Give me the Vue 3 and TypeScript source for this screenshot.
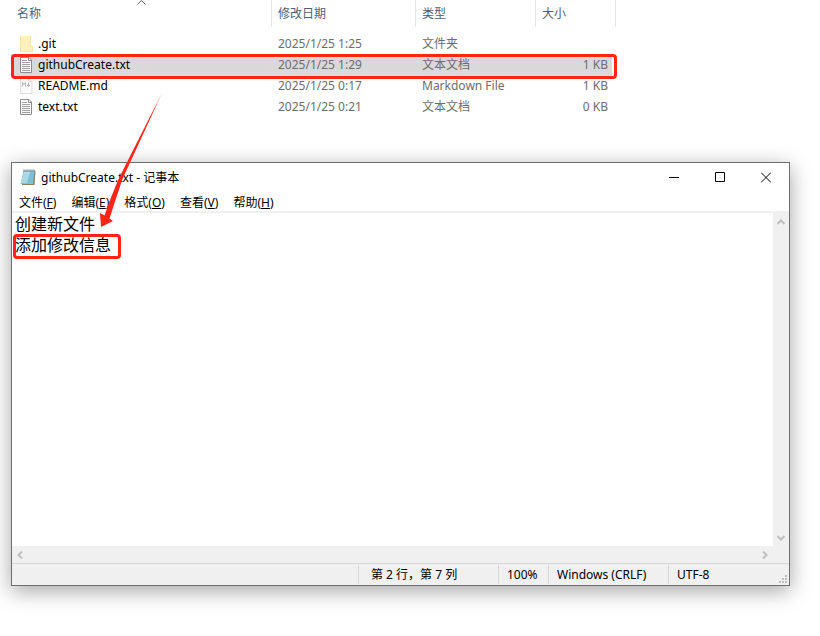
<script setup lang="ts">
import { ref } from 'vue'

interface FileRow {
  name: string
  date: string
  type: string
  size: string
  icon: 'folder' | 'text' | 'markdown'
}

const files: FileRow[] = [
  { name: '.git', date: '2025/1/25 1:25', type: '文件夹', size: '', icon: 'folder' },
  { name: 'githubCreate.txt', date: '2025/1/25 1:29', type: '文本文档', size: '1 KB', icon: 'text' },
  { name: 'README.md', date: '2025/1/25 0:17', type: 'Markdown File', size: '1 KB', icon: 'markdown' },
  { name: 'text.txt', date: '2025/1/25 0:21', type: '文本文档', size: '0 KB', icon: 'text' },
]
const selected = ref('githubCreate.txt')

const menus = [
  { label: '文件', key: 'F' },
  { label: '编辑', key: 'E' },
  { label: '格式', key: 'O' },
  { label: '查看', key: 'V' },
  { label: '帮助', key: 'H' },
]
const content = ref('创建新文件\n添加修改信息')
</script>

<template>
  <main class="desktop">
    <section class="explorer">
      <table class="files">
        <colgroup>
          <col class="c-name" /><col class="c-date" /><col class="c-type" /><col class="c-size" />
        </colgroup>
        <thead>
          <tr>
            <th scope="col" aria-sort="ascending">
              名称
              <svg class="sort" width="9" height="5" viewBox="0 0 9 5"><path d="M.5 4.500 4.500.5l4 4" fill="none" stroke="#666" /></svg>
            </th>
            <th scope="col">修改日期</th>
            <th scope="col">类型</th>
            <th scope="col">大小</th>
          </tr>
        </thead>
        <tbody>
          <tr v-for="f in files" :key="f.name" :class="{ selected: f.name === selected }" @click="selected = f.name">
            <td class="name">
              <span class="cell">
                <svg v-if="f.icon === 'folder'" width="16" height="16" viewBox="0 0 16 16">
                  <path d="M2 0h11v9l1.500 1v6H2z" fill="#fff0bd" />
                  <path d="M2.500 0v15.500h12v-5h-2V0" fill="none" stroke="#f8e5a6" />
                </svg>
                <svg v-else-if="f.icon === 'text'" width="16" height="16" viewBox="0 0 16 16">
                  <path d="M2.500.5h8.500l2.500 2.500v12.500h-11z" fill="#fafafa" stroke="#8c8c8c" />
                  <path d="M10.500.5v3h3" fill="none" stroke="#8c8c8c" />
                  <path d="M4 3.500h5M4 5.500h8M4 7.500h8M4 9.500h8M4 11.500h8M4 13.500h8" stroke="#a0a0a0" />
                </svg>
                <svg v-else width="16" height="16" viewBox="0 0 16 16">
                  <path d="M2.500.5h8.500l3 3v12H2.500z" fill="#fafafa" stroke="#dedede" />
                  <path d="M10.500.5v3h3.500" fill="none" stroke="#dedede" />
                  <path d="M4.500 8.500V4.500l1.500 2 1.500-2v4M10.500 4.500v4M9 7l1.500 1.500L12 7" fill="none" stroke="#b4b4b4" />
                </svg>
                {{ f.name }}
              </span>
            </td>
            <td>{{ f.date }}</td>
            <td>{{ f.type }}</td>
            <td class="size">{{ f.size }}</td>
          </tr>
        </tbody>
      </table>
      <div class="mark mark-row"></div>
    </section>

    <section class="notepad">
      <header class="titlebar">
        <svg width="16" height="17" viewBox="0 0 16 17">
          <path d="M4 2h11.500L14.500 16H2z" fill="#8b7c5c" />
          <path d="M3.500 2H14.500l-1.500 13H.5z" fill="#7fc1d6" />
          <path d="M4 3h6L7 14H1z" fill="#b9e3ee" />
          <path d="M3.500 5h10M3 7h10M3 9h10M2 11h11M2 13h10" stroke="#74b4c8" stroke-width=".5" />
          <path d="M3.500 1.500h11" stroke="#4f6068" stroke-width="2" stroke-dasharray="1 1" />
        </svg>
        <h1>githubCreate.txt - 记事本</h1>
        <div class="controls">
          <button type="button" aria-label="最小化"><svg width="10" height="11"><path d="M0 5.500h10" stroke="#000" /></svg></button>
          <button type="button" aria-label="最大化"><svg width="10" height="11"><path d="M.5.5h9v9h-9z" fill="none" stroke="#000" /></svg></button>
          <button type="button" aria-label="关闭"><svg width="10" height="11"><path d="m0 .5 10 10m0-10-10 10" stroke="#000" /></svg></button>
        </div>
      </header>
      <nav class="menu">
        <button v-for="m in menus" :key="m.key" type="button">{{ m.label }}(<u>{{ m.key }}</u>)</button>
      </nav>
      <div class="editor">
        <textarea v-model="content" aria-label="文本编辑器" spellcheck="false"></textarea>
        <div class="vbar">
          <button type="button" aria-label="向上滚动"><svg width="8" height="6"><path d="m.5 5 3.500-3.500L7.500 5" /></svg></button>
          <button type="button" aria-label="向下滚动"><svg width="8" height="6"><path d="m.5 1 3.500 3.500L7.500 1" /></svg></button>
        </div>
        <div class="hbar">
          <button type="button" aria-label="向左滚动"><svg width="6" height="8"><path d="M5 .5 1.500 4 5 7.500" /></svg></button>
          <button type="button" aria-label="向右滚动"><svg width="6" height="8"><path d="M1 .5 4.500 4 1 7.500" /></svg></button>
        </div>
        <div class="mark mark-text"></div>
      </div>
      <footer class="status">
        <span></span>
        <span class="position">第 2 行，第 7 列</span>
        <span>100%</span>
        <span>Windows (CRLF)</span>
        <span>UTF-8</span>
        <svg class="grip" width="8" height="8"><path d="M6 1h2M3 4h2M6 4h2M0 7h2M3 7h2M6 7h2" stroke="#bfbfbf" stroke-width="2" /></svg>
      </footer>
    </section>

    <svg class="arrow" width="66" height="140" viewBox="0 0 66 140">
      <defs>
        <linearGradient id="tail" x1="0" y1="0" x2="0" y2="1">
          <stop offset="0" stop-color="#ff2418" stop-opacity=".4" />
          <stop offset=".15" stop-color="#ff2418" />
        </linearGradient>
      </defs>
      <path d="M64.500 1 24.500 88 17.500 109 11.500 127.500 15 130 3 136 2 122 6.500 124.500 12 109 20.500 88z" fill="url(#tail)" />
    </svg>
  </main>
</template>

<style>
body {
  margin: 0;
  background: #fff;
}
</style>

<style scoped>
.desktop {
  position: relative;
  display: flex;
  flex-direction: column;
  box-sizing: border-box;
  min-height: 100vh;
  padding: 0 30px 50px 11px;
  overflow: hidden;
  font: 12px/16px "Noto Sans", "Noto Sans CJK SC", sans-serif;
  color: #000;
}
.explorer {
  position: relative;
  height: 162px;
}
.files {
  width: 605px;
  border-collapse: separate;
  border-spacing: 0;
  table-layout: fixed;
}
.c-name { width: 261px; }
.c-date { width: 144px; }
.c-type { width: 120px; }
.c-size { width: 80px; }
th {
  position: relative;
  height: 27px;
  padding: 0 6px;
  box-sizing: border-box;
  text-align: left;
  font-weight: 400;
  color: #4c607a;
  border-right: 1px solid #e5e5e5;
}
.sort {
  position: absolute;
  top: 0;
  left: calc(50% - 4px);
}
thead::after {
  content: "";
  display: block;
  height: 6px;
}
td {
  height: 21px;
  padding: 0 4px 0 6px;
  color: #6d6d6d;
  white-space: nowrap;
}
.name { color: #000; padding-left: 7px; }
.cell {
  display: flex;
  align-items: center;
  gap: 4px;
}
.size {
  text-align: right;
  border-right: 4px solid #fff;
}
.selected { background: #d9d9d9; }
.selected td { box-shadow: 0 1px #d9d9d9; }
.mark {
  position: absolute;
  box-sizing: border-box;
  border: 3px solid #ff2418;
  border-radius: 4px;
  pointer-events: none;
}
.mark-row {
  left: 0;
  top: 54px;
  width: 606px;
  height: 25px;
}
.mark-text {
  left: 1px;
  top: 21px;
  width: 108px;
  height: 25px;
}
.notepad {
  flex: 1;
  display: flex;
  flex-direction: column;
  border: 1px solid #6e6e6e;
  background: #fff;
  box-shadow: 0 5px 20px rgba(0, 0, 0, 0.36);
}
.titlebar {
  display: flex;
  align-items: center;
  gap: 5px;
  height: 29px;
  padding-left: 8px;
}
h1 {
  flex: 1;
  margin: 0;
  font-size: 12px;
  font-weight: 400;
}
button {
  padding: 0;
  border: 0;
  background: none;
  font: inherit;
  color: inherit;
}
.controls {
  display: flex;
  height: 100%;
}
.controls button {
  display: grid;
  place-items: center;
  width: 46px;
}
.menu {
  display: flex;
  gap: 15px;
  height: 17px;
  padding: 2px 0 0 7px;
  border-bottom: 2px solid #f0f0f0;
}
.editor {
  position: relative;
  flex: 1;
  display: grid;
  grid-template: 1fr 17px / 1fr 16px;
  background: #f0f0f0;
}
textarea {
  padding: 1px 3px;
  border: 0;
  outline: 0;
  resize: none;
  background: #fff;
  font: 16px/21px "Noto Sans", "Noto Sans CJK SC", sans-serif;
  color: #000;
}
.vbar, .hbar {
  display: flex;
  justify-content: space-between;
}
.vbar { flex-direction: column; }
.vbar button, .hbar button {
  display: grid;
  place-items: center;
  width: 16px;
  height: 17px;
}
.vbar path, .hbar path {
  fill: none;
  stroke: #bfbfbf;
  stroke-width: 2;
}
.status {
  position: relative;
  display: grid;
  grid-template-columns: 1fr 140px 50px 120px 121px;
  height: 21px;
  border-top: 1px solid #d7d7d7;
  background: #f0f0f0;
}
.status span {
  margin: 1px 0;
  padding: 1px 8px;
  border-left: 1px solid #d7d7d7;
  line-height: 17px;
}
.status span:first-child { border-left: 0; }
.status .position { padding-left: 12px; }
.grip {
  position: absolute;
  right: 2px;
  bottom: 2px;
}
.arrow {
  position: absolute;
  left: 98px;
  top: 91px;
  pointer-events: none;
}
</style>
